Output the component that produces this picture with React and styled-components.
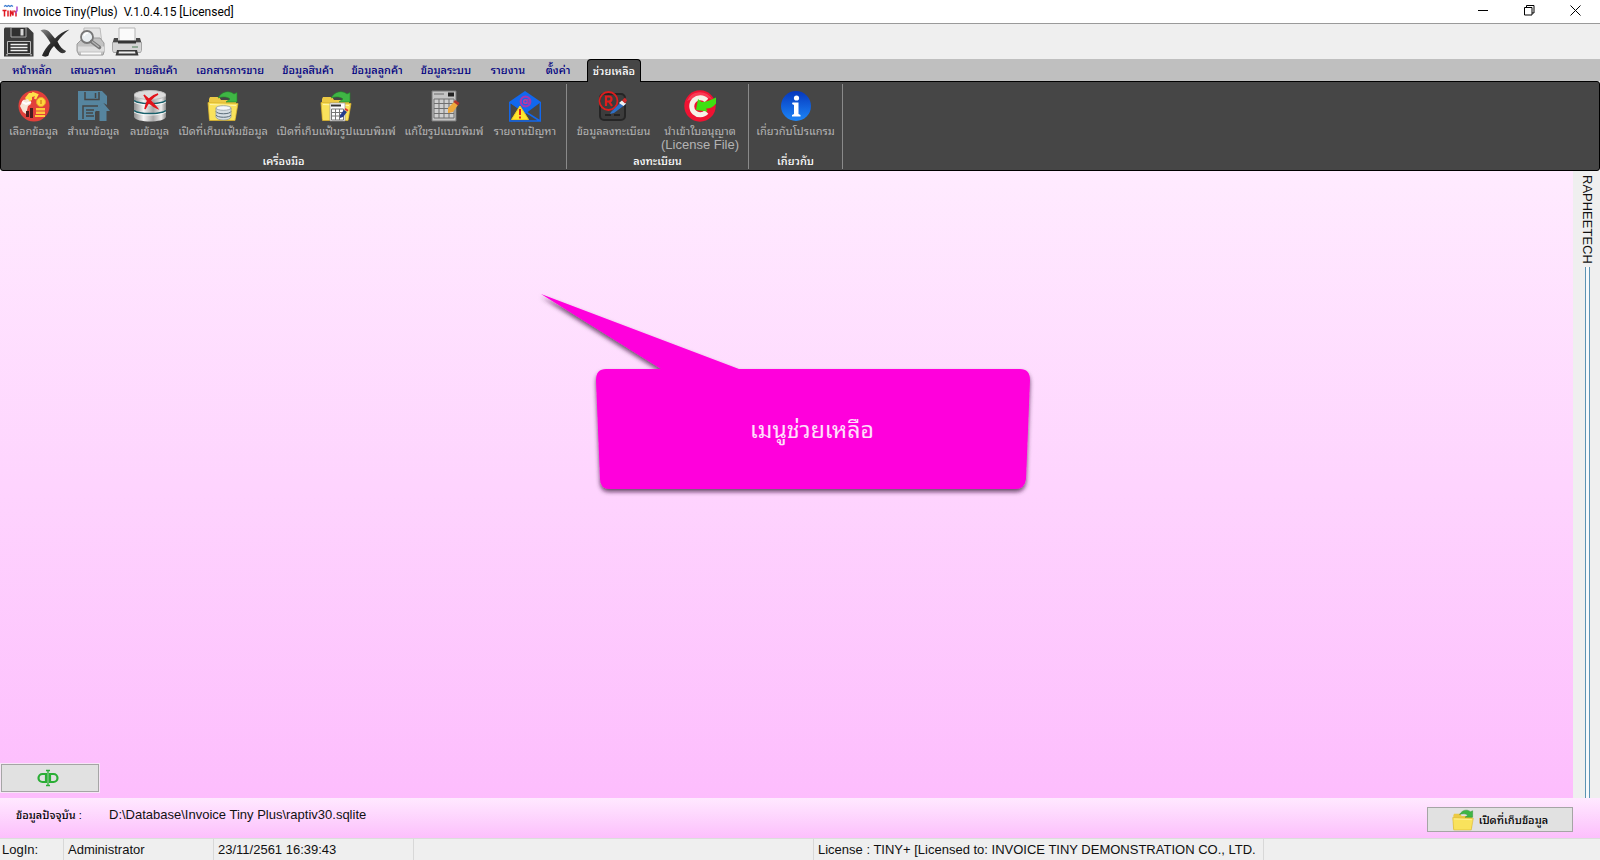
import React from "react";
import styled, { createGlobalStyle } from "styled-components";

const Global = createGlobalStyle`
  *, *::before, *::after { box-sizing: border-box; }
  body { margin: 0; background: #efefef; }
  button { font: inherit; color: inherit; border: 0; margin: 0; padding: 0; background: none; cursor: pointer; }
  svg { display: block; flex: none; }
`;

const Window = styled.div`
  min-height: 100vh;
  display: flex;
  flex-direction: column;
  font-family: "Liberation Sans", "Noto Sans Thai Looped", "Noto Sans Thai", "Noto Sans", sans-serif;
  font-size: 13px;
  line-height: 16px;
  color: #111;
  white-space: nowrap;
`;

const TitleBar = styled.header`
  display: flex;
  align-items: center;
  height: 24px;
  padding: 0 2px;
  background: #fff;
  border-bottom: 1px solid #9a9a9a;
`;

const Title = styled.h1`
  flex: 1;
  margin: 0 0 0 5px;
  font: 400 12px/16px Roboto, "Noto Sans", sans-serif;
  color: #000;
  white-space: pre;
`;

const WindowButtons = styled.div`
  display: flex;
  align-self: flex-start;
`;

const WindowButton = styled.button`
  display: grid;
  place-items: center;
  width: 46px;
  height: 20px;
`;

const QuickBar = styled.div`
  display: flex;
  align-items: center;
  gap: 6px;
  height: 35px;
  padding: 0 4px;
  background: #efefef;
`;

const QuickButton = styled.button`
  width: 30px;
  height: 30px;
`;

const TabBar = styled.nav`
  display: flex;
  height: 22px;
  padding-left: 3px;
  background: #bfbfbf;
`;

const Tab = styled.button`
  width: ${(p) => p.$width}px;
  height: 22px;
  font-size: 11px;
  line-height: 22px;
  font-weight: 500;
  color: #000080;
`;

const ActiveTab = styled(Tab)`
  margin-left: 6px;
  height: 23px;
  color: #fff;
  background: #464646;
  border: 1px solid #000;
  border-bottom: 0;
  border-radius: 4px 4px 0 0;
  z-index: 1;
`;

const Ribbon = styled.section`
  display: flex;
  height: 90px;
  background: #464646;
  border: 1px solid #000;
  border-radius: 3px;
`;

const Group = styled.div`
  display: flex;
  flex-direction: column;
  justify-content: space-between;
  margin: 2px 0 1px;
  padding: 0 4px;
  border-right: 1px solid #8a8a8a;
`;

const Tools = styled.div`
  display: flex;
`;

const Tool = styled.button`
  display: flex;
  flex-direction: column;
  align-items: center;
  width: ${(p) => p.$width}px;
  padding-top: 6px;
  font-size: 11px;
  line-height: 18px;
  color: #b4b4b4;
`;

const ToolNote = styled.span`
  font-size: 13px;
  line-height: 10px;
`;

const GroupName = styled.h2`
  margin: 0;
  font-size: 11px;
  line-height: 16px;
  font-weight: 500;
  text-align: center;
  color: #fff;
`;

const Workspace = styled.main`
  flex: 1;
  display: flex;
`;

const Canvas = styled.div`
  position: relative;
  flex: 1;
  display: flex;
  align-items: flex-end;
  padding: 0 1px 6px;
  background: linear-gradient(#ffebff, #fdbdfd);
`;

const LinkButton = styled.button`
  display: grid;
  place-items: center;
  width: 98px;
  height: 28px;
  padding-right: 4px;
  background: #e1e1e1;
  border: 1px solid #a5a5a5;
  outline: 1px solid #f6e6f6;
`;

const Callout = styled.aside`
  position: absolute;
  left: 535px;
  top: 118px;
  width: 500px;
  height: 210px;
`;

const CalloutText = styled.p`
  position: absolute;
  left: 61px;
  top: 125px;
  width: 432px;
  margin: 0;
  font-size: 23px;
  line-height: 32px;
  text-align: center;
  color: #ffe0fb;
`;

const SideStrip = styled.aside`
  display: flex;
  flex-direction: column;
  align-items: center;
  width: 27px;
  padding-top: 4px;
  background: #efefef;
`;

const SideLabel = styled.span`
  writing-mode: vertical-rl;
  font-size: 13px;
  line-height: 18px;
`;

const SideRail = styled.div`
  flex: 1;
  width: 5px;
  margin: 3px 0 0 2px;
  background: #f7f9fb;
  border: solid #5b93b4;
  border-width: 0 1px;
`;

const DataPanel = styled.section`
  display: flex;
  align-items: center;
  height: 40px;
  padding: 0 27px 0 16px;
  background: linear-gradient(#ffe9ff, #fcbffc);
`;

const DataLabel = styled.span`
  width: 93px;
  padding-bottom: 6px;
  font-size: 11px;
  font-weight: 500;
  color: #000;
`;

const DataPath = styled.span`
  flex: 1;
  padding-bottom: 6px;
`;

const OpenButton = styled.button`
  display: flex;
  align-items: center;
  justify-content: center;
  gap: 5px;
  width: 146px;
  height: 25px;
  margin-top: 3px;
  font-size: 11px;
  font-weight: 500;
  color: #000;
  background: #e1e1e1;
  border: 1px solid #a5a5a5;
`;

const StatusBar = styled.footer`
  display: flex;
  height: 22px;
  background: #efefef;
  border-top: 1px solid #dcdcdc;
`;

const StatusCell = styled.span`
  width: ${(p) => p.$width}px;
  padding-left: ${(p) => p.$pad || 4}px;
  line-height: 21px;
  border-right: 1px solid #d8d8d8;
`;

const AppLogo = () => (
  <svg width="16" height="16" viewBox="0 0 16 16" aria-hidden="true">
    <path d="M2 2.500l1.500-1 1.500 1 1.500-1 1.500 1 1.500-1 1.500 1" stroke="#3a7bd0" strokeWidth="1.300" fill="none" />
    <path d="M.5 6.500h4M2.500 6.500v6M6 6.500v6M8.500 12.500v-6l2.500 5v-5M12.500 6.500l1.500 3v3" stroke="#e01822" strokeWidth="1.500" fill="none" />
    <path d="M15 2.500v4l-1.500 3" stroke="#b04ad0" strokeWidth="1.500" fill="none" />
  </svg>
);

const MinimizeIcon = () => (
  <svg width="11" height="11" viewBox="0 0 11 11" aria-hidden="true">
    <path d="M0 5.500h10" stroke="#000" />
  </svg>
);
const RestoreIcon = () => (
  <svg width="11" height="11" viewBox="0 0 11 11" aria-hidden="true">
    <path d="M.5 2.500h7.500v7.500h-7.500zM2.500 2.500v-2h7.500v7.500h-2" fill="none" stroke="#000" />
  </svg>
);
const CloseIcon = () => (
  <svg width="11" height="11" viewBox="0 0 11 11" aria-hidden="true">
    <path d="M.5 .5l10 10M10.500 .5l-10 10" stroke="#000" />
  </svg>
);

const Icon30 = ({ children }) => (
  <svg width="30" height="30" viewBox="0 0 30 30" aria-hidden="true">{children}</svg>
);
const Icon32 = ({ children }) => (
  <svg width="32" height="32" viewBox="0 0 32 32" aria-hidden="true">{children}</svg>
);

const SaveIcon = () => (
  <Icon30>
    <path d="M1 .5h23l5.500 5.500v23.500h-29.500v-28z" fill="#3b3b3b" />
    <path d="M7 .5h15v9.500h-15z" fill="#303030" stroke="#aaa" />
    <path d="M16.500 2h3v6.500h-3z" fill="#d8d8d8" />
    <path d="M3.500 14.500h23v12h-23z" fill="#2e2e2e" stroke="#bbb" />
    <path d="M6.500 17.500h17M6.500 20.500h17M6.500 23.500h17" stroke="#f0f0f0" strokeWidth="1.400" />
    <path d="M2 27h2v1.500h-2zM26 27h2v1.500h-2z" fill="#999" />
  </Icon30>
);
const DeleteIcon = () => (
  <Icon30>
    <defs>
      <linearGradient id="cross" x2="1" y2="1">
        <stop offset="0" stopColor="#8a8a8a" />
        <stop offset=".35" stopColor="#3a3a3a" />
        <stop offset=".6" stopColor="#202020" />
        <stop offset="1" stopColor="#555" />
      </linearGradient>
    </defs>
    <path
      d="M.5 3.500c3-2 7-1 9 1.500l5.500 6.500c4-4.500 8.500-7.500 14.500-9-5 3.500-9 7.500-12 12 2 4.500 5 8 8.500 9.500-1 2.500-4 3-6.500 1-2.500-2-4-4-5.500-6-3 3-5 6.500-5.500 9.500-1.500 1.500-5 1.500-6.500 0 2-5 5-9 8.500-12.500-2.500-4-5.500-9-10-12.500z"
      fill="url(#cross)"
    />
  </Icon30>
);
const PreviewIcon = () => (
  <Icon30>
    <path d="M8 1h16l2 15h-19z" fill="#e4e4e4" stroke="#bcbcbc" />
    <path d="M3 15l4-4h17l4 5v9l-1 3h-24l-2-4v-7z" fill="#c2c2c2" stroke="#9a9a9a" />
    <path d="M2 19.500h26v5h-26z" fill="#dedede" />
    <path d="M5 26.500h20" stroke="#fafafa" strokeWidth="2" />
    <circle cx="11" cy="10" r="6" fill="#e9eef1" stroke="#777" strokeWidth="1.800" />
    <path d="M8 9c.5-2 2-3 4-3" stroke="#fff" strokeWidth="1.500" fill="none" />
    <path d="M15.500 14.500l8 6" stroke="#777" strokeWidth="3.600" strokeLinecap="round" />
    <path d="M16 14.500l7 5.500" stroke="#b5b5b5" strokeWidth="1.300" />
  </Icon30>
);
const PrinterIcon = () => (
  <Icon30>
    <path d="M7 1h16v13h-16z" fill="#fafafa" stroke="#b5b5b5" />
    <path d="M2 11h4v4h18v-4h4l1.500 5h-29z" fill="#4a4a4a" />
    <path d="M.5 15.500h29v8l-1 2h-27l-1-2z" fill="#d5d5d5" stroke="#a5a5a5" />
    <path d="M6 13.500h18v3h-18z" fill="#353535" />
    <path d="M20 20h6" stroke="#7a9a80" strokeWidth="1.500" />
    <path d="M5 23h20l1.500 5.500h-23z" fill="#3a3a3a" />
    <path d="M7 24.500h16l.5 2h-17z" fill="#eee" />
  </Icon30>
);

const SelectDataIcon = () => (
  <Icon32>
    <circle cx="16" cy="16" r="15.500" fill="#e2403b" />
    <path d="M7 8l4-5 7 0 0 3 -4 1 0 3 -4 2z" fill="#ffe04a" />
    <path d="M2 16l3-6 5-1 3 5-3 2-2 8-3-2z" fill="#f6e6d6" />
    <path d="M4 12l4 2 5-2" fill="none" stroke="#fff" strokeWidth="2" />
    <path d="M8 21h3v6h-3zM12 18h3v10h-3z" fill="#4b1d20" />
    <circle cx="23" cy="12" r="4.500" fill="#ffd53c" stroke="#e7a52a" />
    <path d="M18 18h9v2.500h-9zM18 21.500h9v2.500h-9zM17 25h10v2h-10z" fill="#ffc93c" />
    <path d="M23 10v4" stroke="#d88a1e" strokeWidth="1.500" />
    <path d="M14 3l5 2-2 4" fill="none" stroke="#ffe04a" strokeWidth="2.500" />
  </Icon32>
);
const CopyDataIcon = () => (
  <Icon32>
    <path d="M0 1h24l5 5v9l-3.500-2-8.500 9v8h-17z" fill="#56859f" />
    <path d="M7 2v7.500h14v-7.500M17.500 3v5" fill="none" stroke="#464646" strokeWidth="1.500" />
    <path d="M5 29v-13h15M8 20h8M8 23h7M8 26h8" fill="none" stroke="#464646" strokeWidth="1.500" />
    <path d="M25 12.500l7 8.500h-3.500v10h-7v-10h-4z" fill="#56859f" />
  </Icon32>
);
const DeleteDataIcon = () => (
  <Icon32>
    <defs>
      <linearGradient id="metal">
        <stop offset="0" stopColor="#8e8e8e" />
        <stop offset=".3" stopColor="#f4f4f4" />
        <stop offset=".6" stopColor="#a8a8a8" />
        <stop offset=".85" stopColor="#ececec" />
        <stop offset="1" stopColor="#888" />
      </linearGradient>
    </defs>
    <path d="M0 5v22c2 6 30 6 32 0v-22z" fill="url(#metal)" />
    <ellipse cx="16" cy="5" rx="16" ry="4.500" fill="#dcdcdc" stroke="#bdbdbd" />
    <path d="M0 10.500c5 4 27 4 32 0M0 20.500c5 4 27 4 32 0" fill="none" stroke="#17606b" strokeWidth="1.600" />
    <path d="M0 12c5 4 27 4 32 0M0 22c5 4 27 4 32 0" fill="none" stroke="#fff" strokeWidth=".8" />
    <path d="M10 5c5 4 9 8 13 13-5-2-10-7-13-13zM24 4c-6 3-10 8-13 15 1-8 5-13 13-15z" fill="#e3131b" stroke="#e3131b" strokeWidth="1.500" />
  </Icon32>
);
const Folder = () => (
  <>
    <path d="M2 9l1-2h9l2 3h13l2 2v16l-27 1z" fill="#ecc944" />
    <path d="M1 12.500l30 1-3 17h-25.500z" fill="#f9e25c" stroke="#d9b22c" strokeWidth=".8" />
    <path d="M3 14.500l26 1" stroke="#fff4a8" />
    <path d="M11 8c4-7 11-8 16-4l3-1.500v9.500h-11l4-3c-3-2.500-8-2.500-12-1z" fill="#3fb645" stroke="#23862a" strokeWidth=".6" />
  </>
);
const OpenDataFolderIcon = () => (
  <Icon32>
    <Folder />
    <path d="M9 18v9c1 4 14 4 15 0v-9z" fill="#d4dce2" stroke="#82909a" strokeWidth=".7" />
    <ellipse cx="16.500" cy="18" rx="7.500" ry="2.300" fill="#f4f6f8" stroke="#82909a" strokeWidth=".7" />
    <path d="M9 21.500c1 3 14 3 15 0M9 25c1 3 14 3 15 0" fill="none" stroke="#586b78" />
  </Icon32>
);
const OpenFormFolderIcon = () => (
  <Icon32>
    <Folder />
    <path d="M10 13h15v18h-15z" fill="#fff" stroke="#999" strokeWidth=".7" />
    <path d="M11 14.500h10v2h-10z" fill="#333" />
    <path d="M11.500 19h12v11h-12zM11.500 22.500h12M11.500 26h12M15.500 19v11M19.500 19v11" fill="none" stroke="#777" />
    <path d="M20 25l4-5 3 2-4 5-3 1z" fill="#253c8e" />
    <path d="M24.500 19.500l1-1.500 3 2-1 1.500z" fill="#d33" />
  </Icon32>
);
const EditFormIcon = () => (
  <Icon32>
    <path d="M4 1h24v30h-24z" fill="#c4c4c4" stroke="#777" />
    <path d="M20 2.500h6v4h-6z" fill="#222" />
    <path d="M6 4h10" stroke="#888" strokeWidth="1.500" />
    <path d="M6 9h20v19h-20zM6 13.500h20M6 18.500h20M6 23.500h20M11 9v19M16 9v19M21 9v19" fill="#d0d0d0" stroke="#707070" />
    <path d="M20 18l6-6 4 3-5 7-5 1z" fill="#f0a93c" />
    <path d="M25.500 12l1.500-2 4.500 3-1.500 2.500z" fill="#b3332b" />
  </Icon32>
);
const ReportIcon = () => (
  <Icon32>
    <path d="M0 12l16-11 16 11-16 12z" fill="#1268ee" />
    <path d="M.8 12v19h30.500v-19M1 12l30 19" fill="none" stroke="#1268ee" strokeWidth="1.500" />
    <circle cx="16.500" cy="11.500" r="4.800" fill="none" stroke="#a238b0" strokeWidth="2.200" />
    <circle cx="16.500" cy="11.500" r="1.800" fill="none" stroke="#c23a9a" strokeWidth="1.600" />
    <path d="M18.800 9v4l2 1" fill="none" stroke="#a238b0" strokeWidth="1.500" />
    <path d="M11 16l8.500 13.500h-17z" fill="#ffe62e" stroke="#f3cf1c" />
    <path d="M11 19v6M11 26.500v2" stroke="#e0231c" strokeWidth="2" />
  </Icon32>
);
const RegisterIcon = () => (
  <Icon32>
    <rect x="2" y="4" width="25" height="26" rx="4" fill="#3c3c3c" stroke="#252525" strokeWidth="2" />
    <path d="M7 25h6M16 25h6" stroke="#222" strokeWidth="2" />
    <circle cx="10.500" cy="11" r="9" fill="none" stroke="#df1d1d" strokeWidth="1.800" />
    <path d="M8 16v-9.500h3a2.500 2.500 0 0 1 0 5h-3M11 11.500l3 4.500" fill="none" stroke="#df1d1d" strokeWidth="2.200" />
    <path d="M13 22l11-11 4 3-12 9-4 1z" fill="#2e6fc4" />
    <path d="M21 13l3-2.500 4 3-2.500 2.500z" fill="#f2f2f2" />
    <path d="M24 10.500l3-3 2 3-2 3z" fill="#cf2b2b" />
  </Icon32>
);
const LicenseIcon = () => (
  <Icon32>
    <circle cx="16" cy="16" r="15.700" fill="#f01232" />
    <path d="M3 11a14 14 0 0 1 25-2c-9-3-17-2-25 2z" fill="#ff6478" opacity=".5" />
    <path d="M22.500 10.500a8.500 8.500 0 1 0 0 11.500" fill="none" stroke="#f6f1e8" strokeWidth="5" />
    <path d="M12 20l2-11 3.500 3c5 0 9-2 14.500-4.500v6c-3 4-6 5-10 5l1.500 3z" fill="#3fe011" />
  </Icon32>
);
const InfoIcon = () => (
  <Icon32>
    <defs>
      <linearGradient id="info" x2="0" y2="1">
        <stop offset="0" stopColor="#0637bd" />
        <stop offset="1" stopColor="#1c86f8" />
      </linearGradient>
    </defs>
    <circle cx="16" cy="16" r="15" fill="url(#info)" />
    <circle cx="16.500" cy="8" r="2.600" fill="#fff" />
    <path d="M12.500 12.500h6v11.500l2 1v1.500h-8.500v-1.500l2-1v-9l-2-1z" fill="#fff" />
  </Icon32>
);
const FolderIcon = () => (
  <svg width="22" height="22" viewBox="0 0 32 32" aria-hidden="true"><Folder /></svg>
);
const LinkIcon = () => (
  <svg width="22" height="18" viewBox="0 0 22 18" aria-hidden="true">
    <path d="M9 5h-3.500a4 4 0 0 0 0 8h3.500zM13 5h3.500a4 4 0 0 1 0 8h-3.500z" fill="none" stroke="#2aae35" strokeWidth="2.200" />
    <path d="M11 2v14M9 1.500h4M9 16.500h4" stroke="#2aae35" strokeWidth="1.300" />
  </svg>
);

const tabs = [
  ["หน้าหลัก", 58],
  ["เสนอราคา", 64],
  ["ขายสินค้า", 62],
  ["เอกสารการขาย", 86],
  ["ข้อมูลสินค้า", 70],
  ["ข้อมูลลูกค้า", 68],
  ["ข้อมูลระบบ", 70],
  ["รายงาน", 54],
  ["ตั้งค่า", 46],
];

const quickActions = [
  ["บันทึก", SaveIcon],
  ["ลบ", DeleteIcon],
  ["ดูตัวอย่าง", PreviewIcon],
  ["พิมพ์", PrinterIcon],
];

const groups = [
  {
    name: "เครื่องมือ",
    tools: [
      { label: "เลือกข้อมูล", width: 57, Icon: SelectDataIcon },
      { label: "สำเนาข้อมูล", width: 63, Icon: CopyDataIcon },
      { label: "ลบข้อมูล", width: 49, Icon: DeleteDataIcon },
      { label: "เปิดที่เก็บแฟ้มข้อมูล", width: 98, Icon: OpenDataFolderIcon },
      { label: "เปิดที่เก็บแฟ้มรูปแบบพิมพ์", width: 128, Icon: OpenFormFolderIcon },
      { label: "แก้ไขรูปแบบพิมพ์", width: 88, Icon: EditFormIcon },
      { label: "รายงานปัญหา", width: 74, Icon: ReportIcon },
    ],
  },
  {
    name: "ลงทะเบียน",
    tools: [
      { label: "ข้อมูลลงทะเบียน", width: 85, Icon: RegisterIcon },
      { label: "นำเข้าใบอนุญาต", note: "(License File)", width: 88, Icon: LicenseIcon },
    ],
  },
  {
    name: "เกี่ยวกับ",
    tools: [{ label: "เกี่ยวกับโปรแกรม", width: 85, Icon: InfoIcon }],
  },
];

export default function App() {
  return (
    <Window>
      <Global />
      <TitleBar>
        <AppLogo />
        <Title>{"Invoice Tiny(Plus)  V.1.0.4.15 [Licensed]"}</Title>
        <WindowButtons>
          <WindowButton aria-label="Minimize"><MinimizeIcon /></WindowButton>
          <WindowButton aria-label="Restore"><RestoreIcon /></WindowButton>
          <WindowButton aria-label="Close"><CloseIcon /></WindowButton>
        </WindowButtons>
      </TitleBar>

      <QuickBar>
        {quickActions.map(([label, Icon]) => (
          <QuickButton key={label} aria-label={label}><Icon /></QuickButton>
        ))}
      </QuickBar>

      <TabBar>
        {tabs.map(([label, width]) => (
          <Tab key={label} $width={width}>{label}</Tab>
        ))}
        <ActiveTab $width={54} aria-current="page">ช่วยเหลือ</ActiveTab>
      </TabBar>

      <Ribbon>
        {groups.map((group) => (
          <Group key={group.name}>
            <Tools>
              {group.tools.map(({ label, note, width, Icon }) => (
                <Tool key={label} $width={width}>
                  <Icon />
                  <span>{label}</span>
                  {note && <ToolNote>{note}</ToolNote>}
                </Tool>
              ))}
            </Tools>
            <GroupName>{group.name}</GroupName>
          </Group>
        ))}
      </Ribbon>

      <Workspace>
        <Canvas>
          <LinkButton aria-label="Link"><LinkIcon /></LinkButton>
          <Callout>
            <svg width="500" height="210" viewBox="0 0 500 210" aria-hidden="true">
              <defs>
                <filter id="shadow" x="-5%" y="-5%" width="110%" height="115%">
                  <feDropShadow dx="0" dy="3" stdDeviation="2" floodColor="#301030" floodOpacity=".7" />
                </filter>
              </defs>
              <path
                d="M6 5L204 80H485Q495 80 495 91L491 190Q490 200 480 200H75Q65 200 65 190L61 91Q61 80 71 80H126Z"
                fill="#ff00dc"
                filter="url(#shadow)"
              />
            </svg>
            <CalloutText>เมนูช่วยเหลือ</CalloutText>
          </Callout>
        </Canvas>
        <SideStrip>
          <SideLabel>RAPHEETECH</SideLabel>
          <SideRail />
        </SideStrip>
      </Workspace>

      <DataPanel>
        <DataLabel>ข้อมูลปัจจุบัน :</DataLabel>
        <DataPath>D:\Database\Invoice Tiny Plus\raptiv30.sqlite</DataPath>
        <OpenButton><FolderIcon />เปิดที่เก็บข้อมูล</OpenButton>
      </DataPanel>

      <StatusBar>
        <StatusCell $width={64} $pad={2}>LogIn:</StatusCell>
        <StatusCell $width={150}>Administrator</StatusCell>
        <StatusCell $width={200}>23/11/2561 16:39:43</StatusCell>
        <StatusCell $width={400} />
        <StatusCell $width={450}>License : TINY+ [Licensed to: INVOICE TINY DEMONSTRATION CO., LTD.</StatusCell>
      </StatusBar>
    </Window>
  );
}
